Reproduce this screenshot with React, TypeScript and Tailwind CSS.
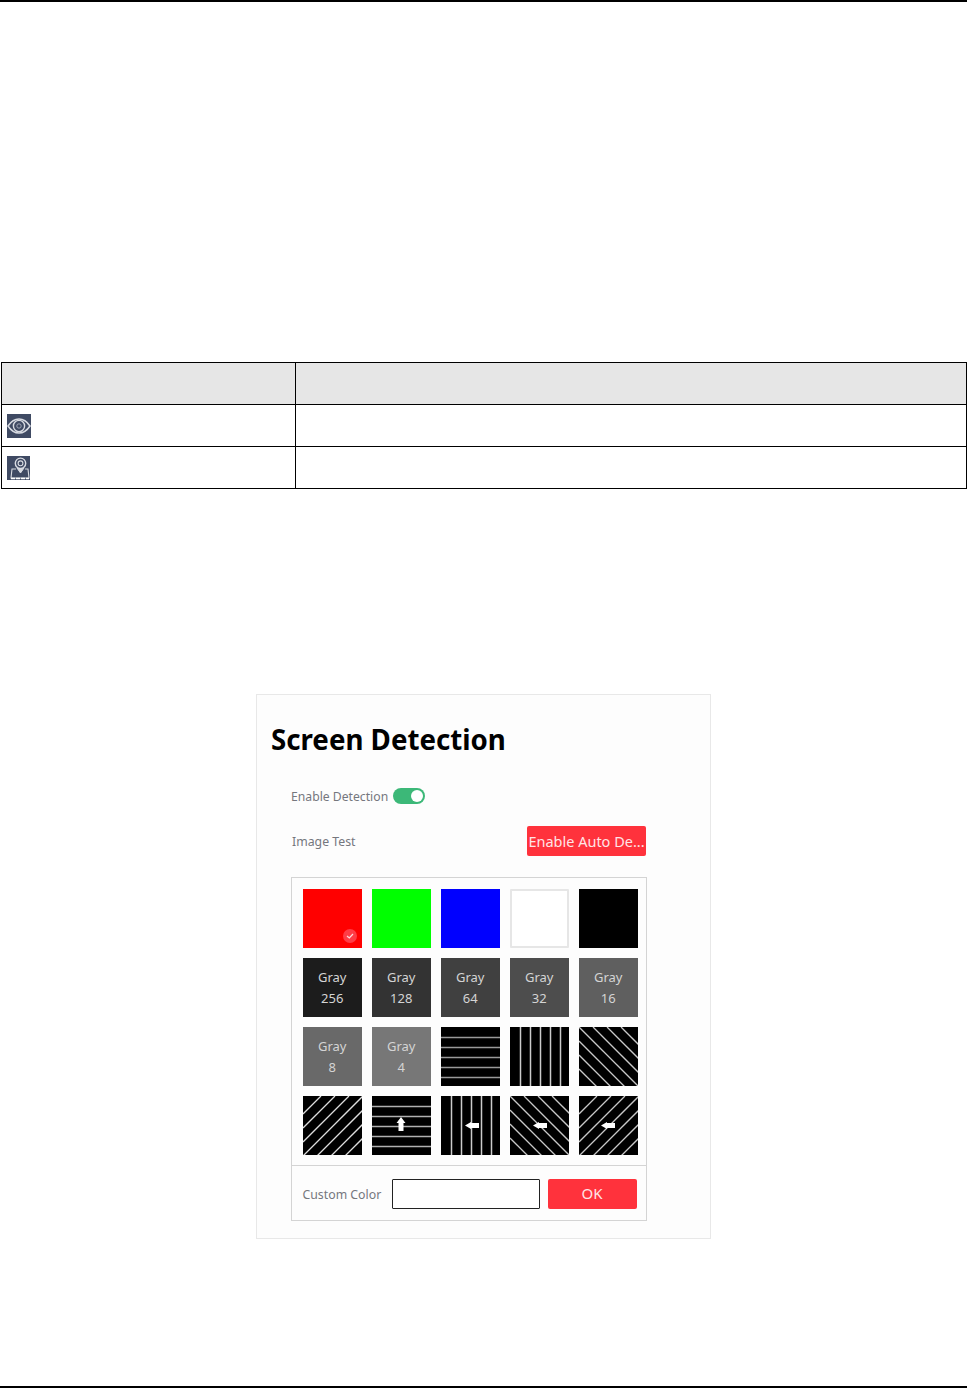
const font = "[font-family:'Noto_Sans',sans-serif]";

function Tile({ bg, a, b }: { bg: string; a: string; b: string }) {
  return (
    <div className={`h-[59.5px] w-[59.5px] flex flex-col items-center justify-center gap-[3px] text-[13px] leading-[18px] text-[#d4d4d4] ${bg}`}>
      <span>{a}</span>
      <span>{b}</span>
    </div>
  );
}

const offsets = [-42, -28, -14, 0, 14, 28, 42];
const steps = [10, 20, 30, 40, 50];

function Pattern({ kind, arrow, stroke = "#a0a0a0", ax = 24 }: { kind: "h" | "v" | "d" | "u"; arrow?: "up" | "left"; stroke?: string; ax?: number }) {
  return (
    <svg width="59.5" height="59.5" viewBox="0 0 59.5 59.5" className="block bg-black">
      {kind === "h" && steps.map((s) => <line key={s} x1="0" x2="60" y1={s + 0.5} y2={s + 0.5} stroke={stroke} strokeWidth="1.5" />)}
      {kind === "v" && steps.map((s) => <line key={s} y1="0" y2="60" x1={s + 0.5} x2={s + 0.5} stroke={stroke} strokeWidth="1.5" />)}
      {kind === "d" && offsets.map((c) => <line key={c} x1={Math.max(0, -c)} y1={Math.max(0, c)} x2={Math.min(60, 60 - c)} y2={Math.min(60, 60 + c)} stroke={stroke} strokeWidth="1.3" />)}
      {kind === "u" && offsets.map((c) => <line key={c} x1={Math.max(0, -c)} y1={60 - Math.max(0, c)} x2={Math.min(60, 60 - c)} y2={60 - Math.min(60, 60 + c)} stroke={stroke} strokeWidth="1.3" />)}
      {arrow === "up" && <path d="M29 21 L33.5 27 H31.5 V35 H26.5 V27 H24.5 Z" fill="#fff" />}
      {arrow === "left" && <path d={`M${ax} 29.5 L${ax + 6} 26 V27 H${ax + 14} V32 H${ax + 6} V33 Z`} fill="#fff" />}
    </svg>
  );
}

export default function App() {
  return (
    <div className={`relative h-[1389px] w-[967px] overflow-hidden bg-white ${font}`}>
      <div className="h-[2px] bg-black" />

      <div className="ml-px mt-[360px] w-[966px] border border-b-0 border-black">
        <div className="flex h-[42px] border-b border-black bg-[#e6e6e6]">
          <div className="w-[294px] border-r border-black" />
        </div>
        <div className="flex h-[42px] border-b border-black">
          <div className="w-[294px] border-r border-black pl-[5px] pt-[9px]">
            <svg width="24" height="24" viewBox="0 0 24 24" className="block bg-[#3f4a63]">
              <path d="M1 12 C5 6 9 5 12 5 C15 5 19 6 23 12 C19 18 15 19 12 19 C9 19 5 18 1 12 Z" fill="none" stroke="#d8dbe2" strokeWidth="1.5" />
              <circle cx="12" cy="12" r="5.6" fill="none" stroke="#d8dbe2" strokeWidth="1.4" />
              <circle cx="12" cy="12" r="2.2" fill="none" stroke="#aab0bd" strokeWidth="0.9" />
            </svg>
          </div>
        </div>
        <div className="flex h-[42px] border-b border-black">
          <div className="w-[294px] border-r border-black pl-[5px] pt-[9px]">
            <svg width="23" height="24" viewBox="0 0 23 24" className="block bg-[#3f4a63]">
              <circle cx="13.5" cy="7.3" r="5.2" fill="none" stroke="#d8dbe2" strokeWidth="1.4" />
              <circle cx="13.5" cy="7.3" r="2.4" fill="none" stroke="#d8dbe2" strokeWidth="1.1" />
              <path d="M10 12 L13.5 17 L17 12" fill="#d8dbe2" stroke="#d8dbe2" strokeWidth="1" />
              <path d="M9 13 H5 L4 22 H22 L21 13 H18" fill="none" stroke="#d8dbe2" strokeWidth="1.1" />
              <path d="M4 22.5 H22" stroke="#ffffff" strokeWidth="1.5" strokeDasharray="4 1" />
            </svg>
          </div>
        </div>
      </div>

      <div className="ml-[256px] mt-[205px] h-[545px] w-[455px] border border-[#e8e8e8] bg-[#fdfdfd]">
        <h1 className="ml-[14px] mt-[25px] text-[27.7px] font-bold leading-[38px] text-black">Screen Detection</h1>

        <div className="ml-[34px] mt-[30px] flex h-[16px] items-center">
          <span className="pt-[2px] text-[12.2px] text-[#75777d]">Enable Detection</span>
          <span className="ml-[5px] flex h-[16px] w-[32px] items-center justify-end rounded-full bg-[#3cb878] pr-[2px]">
            <span className="h-[12px] w-[12px] rounded-full bg-white" />
          </span>
        </div>

        <div className="ml-[35px] mt-[22px] flex h-[30px] w-[354px] items-center justify-between">
          <span className="pt-[2px] text-[12.3px] text-[#75777d]">Image Test</span>
          <button className="h-[30px] w-[119px] whitespace-nowrap rounded-[2px] bg-[#ff323c] pt-[2px] text-center text-[14.5px] text-[#ffe4e6]">
            Enable Auto De...
          </button>
        </div>

        <div className="ml-[34px] mt-[21px] h-[344px] w-[356px] border-2 border-[#d4d4d4] [border-width:1.5px]">
          <div className="grid h-[288px] grid-cols-[repeat(5,59.5px)] content-start gap-[9.5px] border-b border-[#d4d4d4] pl-[10.5px] pt-[10.5px]">
            <div className="relative h-[59.5px] w-[59.5px] bg-[#ff0000]">
              <span className="absolute bottom-[5px] right-[5px] flex h-[14px] w-[14px] items-center justify-center rounded-full bg-[#ff3c46]">
                <svg width="10" height="10" viewBox="0 0 10 10"><path d="M2 5 L4.3 7 L8 3" fill="none" stroke="#ffd9dc" strokeWidth="1.2" /></svg>
              </span>
            </div>
            <div className="h-[59.5px] w-[59.5px] bg-[#00ff00]" />
            <div className="h-[59.5px] w-[59.5px] bg-[#0000ff]" />
            <div className="h-[59.5px] w-[59.5px] rounded-[1px] border-2 border-[#e6e6e6] bg-white" />
            <div className="h-[59.5px] w-[59.5px] bg-black" />
            <Tile bg="bg-[#1c1c1c]" a="Gray" b="256" />
            <Tile bg="bg-[#333333]" a="Gray" b="128" />
            <Tile bg="bg-[#404040]" a="Gray" b="64" />
            <Tile bg="bg-[#4d4d4d]" a="Gray" b="32" />
            <Tile bg="bg-[#5f5f5f]" a="Gray" b="16" />
            <Tile bg="bg-[#696969]" a="Gray" b="8" />
            <Tile bg="bg-[#777777]" a="Gray" b="4" />
            <Pattern kind="h" stroke="#999999" />
            <Pattern kind="v" stroke="#cccccc" />
            <Pattern kind="d" stroke="#c8c8c8" />
            <Pattern kind="u" stroke="#dddddd" />
            <Pattern kind="h" arrow="up" stroke="#b0b0b0" />
            <Pattern kind="v" arrow="left" stroke="#cccccc" ax={24} />
            <Pattern kind="d" arrow="left" stroke="#c8c8c8" ax={23} />
            <Pattern kind="u" arrow="left" stroke="#c8c8c8" ax={22} />
          </div>
          <div className="flex h-[53px] items-center pl-[10.5px] pt-[2px]">
            <span className="w-[89px] whitespace-nowrap pt-[3px] text-[12.3px] text-[#75777d]">Custom Color</span>
            <div className="h-[30px] w-[148px] rounded-[1px] border-[1.5px] border-[#222222] bg-white" />
            <button className="ml-[8px] h-[30px] w-[89px] rounded-[2px] bg-[#ff323c] text-[15px] text-[#ffe4e6]">OK</button>
          </div>
        </div>
      </div>

      <div className="absolute bottom-[1px] left-0 h-[2px] w-full bg-black" />
    </div>
  );
}
